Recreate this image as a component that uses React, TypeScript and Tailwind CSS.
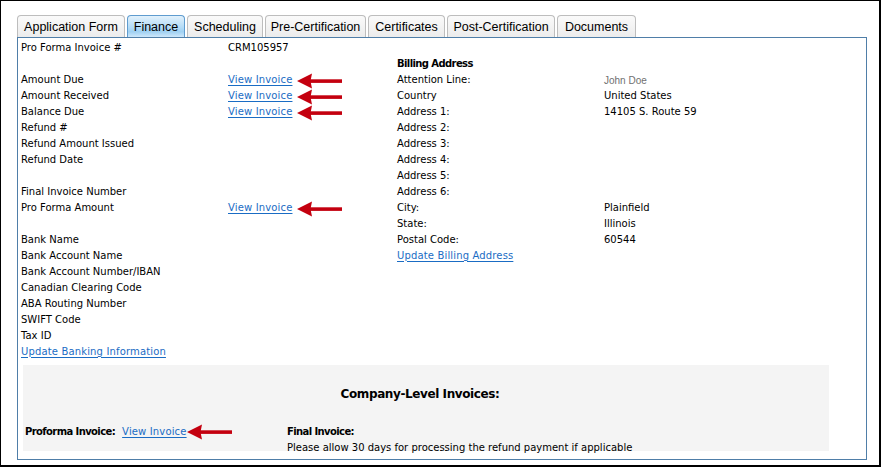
import React from 'react'

const tabs = [
  { label: 'Application Form', w: 'w-[108px]' },
  { label: 'Finance', w: 'w-[58px]', active: true },
  { label: 'Scheduling', w: 'w-[76px]' },
  { label: 'Pre-Certification', w: 'w-[101px]' },
  { label: 'Certificates', w: 'w-[77px]' },
  { label: 'Post-Certification', w: 'w-[108px]' },
  { label: 'Documents', w: 'w-[79px]' },
]

function Arrow({ className = '' }: { className?: string }) {
  return (
    <svg width="46" height="16" viewBox="0 0 46 16" className={className}>
      <polygon points="0,8 15,0.5 13.5,8 15,15.5" fill="#c4000f" />
      <rect x="13" y="6.3" width="32" height="3.6" fill="#c4000f" />
    </svg>
  )
}

function Link({ children }: { children: React.ReactNode }) {
  return <span className="text-[#1a6cc4] underline underline-offset-[2px] tracking-[0.15px]">{children}</span>
}

type Row = { label?: string; value?: React.ReactNode; link?: boolean; arrow?: boolean }

const leftRows: Row[] = [
  { label: 'Pro Forma Invoice #', value: 'CRM105957' },
  {},
  { label: 'Amount Due', link: true, arrow: true },
  { label: 'Amount Received', link: true, arrow: true },
  { label: 'Balance Due', link: true, arrow: true },
  { label: 'Refund #' },
  { label: 'Refund Amount Issued' },
  { label: 'Refund Date' },
  {},
  { label: 'Final Invoice Number' },
  { label: 'Pro Forma Amount', link: true, arrow: true },
  {},
  { label: 'Bank Name' },
  { label: 'Bank Account Name' },
  { label: 'Bank Account Number/IBAN' },
  { label: 'Canadian Clearing Code' },
  { label: 'ABA Routing Number' },
  { label: 'SWIFT Code' },
  { label: 'Tax ID' },
]

const rightRows: Row[] = [
  { label: 'Country', value: 'United States' },
  { label: 'Address 1:', value: '14105 S. Route 59' },
  { label: 'Address 2:' },
  { label: 'Address 3:' },
  { label: 'Address 4:' },
  { label: 'Address 5:' },
  { label: 'Address 6:' },
  { label: 'City:', value: 'Plainfield' },
  { label: 'State:', value: 'Illinois' },
  { label: 'Postal Code:', value: '60544' },
]

export default function App() {
  return (
    <div className="w-[881px] h-[467px] bg-white border-t border-l border-r-2 border-b-2 border-black font-['DejaVu_Sans',sans-serif] text-[10px] text-black overflow-hidden">
      <div className="flex gap-[2px] ml-[16px] mt-[14px] font-['Liberation_Sans',Arial,sans-serif] text-[12.5px]">
        {tabs.map((t) => (
          <div
            key={t.label}
            className={
              t.w +
              ' h-[22px] pt-[2px] flex items-center justify-center rounded-t-[4px] border border-b-0 ' +
              (t.active
                ? 'border-[#5f9ccf] bg-[linear-gradient(#e2f1fc,#b3dbf6_55%,#9fd0f2_75%,#cfe8fa)]'
                : 'border-[#bdbdbd] bg-[linear-gradient(#fafafa,#ececec)]')
            }
          >
            {t.label}
          </div>
        ))}
      </div>

      <div className="ml-[16px] w-[850px] h-[423px] border border-[#4f7ea8] pt-[1px] pl-[3px]">
        <div className="flex">
          <div className="w-[376px]">
            {leftRows.map((r, i) => (
              <div key={i} className="h-4 flex items-center">
                <div className="w-[207px]">{r.label}</div>
                <div className="flex items-center">
                  {r.link ? <Link>View Invoice</Link> : r.value}
                  {r.arrow && <Arrow className="ml-[5px] mt-[4px]" />}
                </div>
              </div>
            ))}
            <div className="h-4 flex items-center">
              <Link>Update Banking Information</Link>
            </div>
          </div>

          <div className="flex-1">
            <div className="h-4" />
            <div className="h-4 flex items-center font-bold tracking-[-0.6px]">Billing Address</div>
            <div className="h-4 flex items-center">
              <div className="w-[207px]">Attention Line:</div>
              <div className="mt-[3px] font-['Liberation_Sans',Arial,sans-serif] text-[#707070]">John Doe</div>
            </div>
            {rightRows.map((r, i) => (
              <div key={i} className="h-4 flex items-center">
                <div className="w-[207px]">{r.label}</div>
                <div>{r.value}</div>
              </div>
            ))}
            <div className="h-4 flex items-center">
              <Link>Update Billing Address</Link>
            </div>
          </div>
        </div>

        <div className="mt-[6px] ml-[2px] w-[806px] h-[86px] bg-[#f4f4f4] pt-[21px] pl-[2px]">
          <div className="h-4 flex items-center justify-center pr-[14px] font-bold text-[12px] tracking-[-0.4px]">
            Company-Level Invoices:
          </div>
          <div className="flex mt-[21px]">
            <div className="w-[262px] h-4 flex items-center">
              <span className="font-bold tracking-[-0.6px] mr-[7px]">Proforma Invoice:</span>
              <Link>View Invoice</Link>
              <Arrow className="mt-[2px]" />
            </div>
            <div>
              <div className="h-4 flex items-center font-bold tracking-[-0.6px]">Final Invoice:</div>
              <div className="h-4 flex items-center">Please allow 30 days for processing the refund payment if applicable</div>
            </div>
          </div>
        </div>
      </div>
    </div>
  )
}
